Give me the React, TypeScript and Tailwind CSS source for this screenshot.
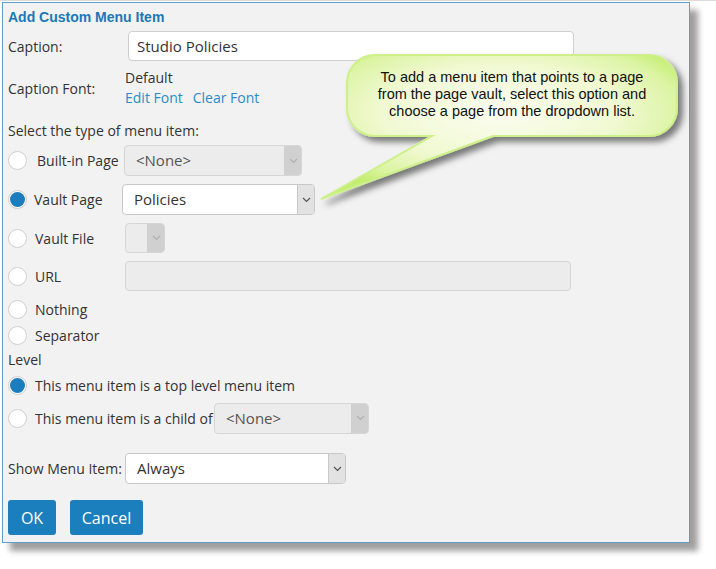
import React from "react";

const Chevron = ({ color }: { color: string }) => (
  <svg width="9" height="6" viewBox="0 0 9 6" fill="none">
    <path d="M1 1 L4.5 4.5 L8 1" stroke={color} strokeWidth="1.2" />
  </svg>
);

const Radio = ({ checked }: { checked?: boolean }) => (
  <span className="w-[19px] h-[19px] rounded-full border border-[#cfcfcf] bg-white flex items-center justify-center shrink-0">
    {checked && <span className="w-[15px] h-[15px] rounded-full bg-[#1b7dbd]" />}
  </span>
);

const Select = ({
  text,
  disabled,
  className,
}: {
  text: string;
  disabled?: boolean;
  className: string;
}) => (
  <div
    className={
      "flex rounded-[4px] border overflow-hidden shrink-0 " +
      (disabled ? "border-[#d6d6d6] bg-[#ececec] " : "border-[#c8c8c8] bg-white ") +
      className
    }
  >
    <div
      className={
        "flex-1 flex items-center pl-[11px] text-[15px] " +
        (disabled ? "text-[#555]" : "text-[#333]")
      }
    >
      {text}
    </div>
    <div
      className={
        "w-[17px] flex items-center justify-center border-l " +
        (disabled ? "bg-[#d0d0d0] border-[#d0d0d0]" : "bg-[#e2e2e2] border-[#c8c8c8]")
      }
    >
      <Chevron color={disabled ? "#b0b0b0" : "#555"} />
    </div>
  </div>
);

export default function App() {
  return (
    <div
      className="relative w-[716px] h-[569px] bg-white overflow-hidden border-t border-[#dcdcdc]"
      style={{ fontFamily: '"Open Sans", "Noto Sans", sans-serif' }}
    >
      <div className="ml-[2px] mt-[1px] w-[688px] h-[541px] bg-[#f2f2f2] border border-[#5c9fcb] shadow-[8px_8px_6px_rgba(0,0,0,0.38)] pl-[5px] text-[14px] text-[#333] flex flex-col whitespace-nowrap">
        <div
          className="mt-[5px] h-[18px] leading-[18px] text-[14px] font-bold text-[#1c78b6]"
          style={{ fontFamily: '"Liberation Sans", Arial, sans-serif' }}
        >
          Add Custom Menu Item
        </div>

        <div className="mt-[5px] h-[30px] flex items-center">
          <div className="w-[120px]">Caption:</div>
          <div className="w-[446px] h-[30px] bg-white border border-[#cfcfcf] rounded-[4px] flex items-center pl-[8px] text-[15px] text-[#333]">
            Studio Policies
          </div>
        </div>

        <div className="mt-[7px] flex items-center">
          <div className="w-[117px]">Caption Font:</div>
          <div className="flex flex-col">
            <div className="h-[20px] leading-[20px]">Default</div>
            <div className="h-[20px] leading-[20px] text-[#2b8bcb] flex gap-[10px]">
              <span>Edit Font</span>
              <span>Clear Font</span>
            </div>
          </div>
        </div>

        <div className="mt-[13px] h-[20px] leading-[20px]">Select the type of menu item:</div>

        <div className="mt-[4px] h-[31px] flex items-center">
          <div className="w-[116px] flex items-center gap-[10px]">
            <Radio />
            <span>Built-in Page</span>
          </div>
          <Select text="<None>" disabled className="w-[178px] h-[31px]" />
        </div>

        <div className="mt-[8px] h-[31px] flex items-center">
          <div className="w-[114px] flex items-center gap-[7px]">
            <Radio checked />
            <span>Vault Page</span>
          </div>
          <Select text="Policies" className="w-[193px] h-[31px]" />
        </div>

        <div className="mt-[8px] h-[30px] flex items-center">
          <div className="w-[117px] flex items-center gap-[8px]">
            <Radio />
            <span>Vault File</span>
          </div>
          <Select text="" disabled className="w-[40px] h-[30px]" />
        </div>

        <div className="mt-[8px] h-[30px] flex items-center">
          <div className="w-[117px] flex items-center gap-[8px]">
            <Radio />
            <span>URL</span>
          </div>
          <div className="w-[446px] h-[30px] bg-[#ececec] border border-[#d6d6d6] rounded-[4px]" />
        </div>

        <div className="mt-[8px] h-[20px] flex items-center gap-[8px]">
          <Radio />
          <span>Nothing</span>
        </div>

        <div className="mt-[6px] h-[20px] flex items-center gap-[8px]">
          <Radio />
          <span>Separator</span>
        </div>

        <div className="mt-[5px] h-[20px] leading-[20px]">Level</div>

        <div className="mt-[5px] h-[20px] flex items-center gap-[8px]">
          <Radio checked />
          <span>This menu item is a top level menu item</span>
        </div>

        <div className="mt-[8px] h-[30px] flex items-center">
          <div className="w-[206px] flex items-center gap-[8px]">
            <Radio />
            <span>This menu item is a child of</span>
          </div>
          <Select text="<None>" disabled className="w-[155px] h-[31px]" />
        </div>

        <div className="mt-[20px] h-[31px] flex items-center">
          <div className="w-[117px]">Show Menu Item:</div>
          <Select text="Always" className="w-[221px] h-[31px]" />
        </div>

        <div className="mt-[16px] flex gap-[14px] text-[16px] text-white">
          <div className="w-[48px] h-[35px] rounded-[3px] bg-[#1b7ebd] flex items-center justify-center">
            OK
          </div>
          <div className="w-[73px] h-[35px] rounded-[3px] bg-[#1b7ebd] flex items-center justify-center">
            Cancel
          </div>
        </div>
      </div>

      {/* Callout bubble */}
      <div className="absolute left-[310px] top-[45px] w-[400px] h-[165px]">
        <svg width="400" height="165" viewBox="0 0 400 165" className="absolute left-0 top-0">
          <defs>
            <radialGradient id="bg" cx="50%" cy="40%" r="60%">
              <stop offset="0%" stopColor="#fbfdf0" />
              <stop offset="55%" stopColor="#f1f9d2" />
              <stop offset="85%" stopColor="#dcf4a4" />
              <stop offset="100%" stopColor="#c4ee72" />
            </radialGradient>
            <filter id="sh" x="-10%" y="-10%" width="130%" height="140%">
              <feDropShadow dx="5" dy="5" stdDeviation="3" floodColor="#000" floodOpacity="0.5" />
            </filter>
          </defs>
          <path
            d="M65 9 H339 A28 28 0 0 1 367 37 V62 A28 28 0 0 1 339 90 H183 L11 153 L122 90 H65 A28 28 0 0 1 37 62 V37 A28 28 0 0 1 65 9 Z"
            fill="url(#bg)"
            stroke="#cdf08a"
            strokeWidth="2"
            filter="url(#sh)"
          />
        </svg>
        <div
          className="absolute left-[37px] top-[23px] w-[330px] text-center text-[14.5px] leading-[17px] text-[#111]"
          style={{ fontFamily: '"Liberation Sans", Arial, sans-serif' }}
        >
          To add a menu item that points to a page
          <br />
          from the page vault, select this option and
          <br />
          choose a page from the dropdown list.
        </div>
      </div>
    </div>
  );
}
